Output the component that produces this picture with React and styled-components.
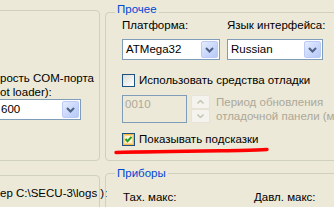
import styled, { createGlobalStyle, css } from "styled-components";

const GlobalStyle = createGlobalStyle`
  html, body { margin: 0; padding: 0; }
  body {
    background: #ece9d8;
    font-family: "Liberation Sans", Arial, sans-serif;
    font-size: 11.5px;
    color: #000;
  }
`;

const Screen = styled.div`
  position: relative;
  width: 334px;
  height: 207px;
  overflow: hidden;
  display: flex;
  gap: 5px;
  line-height: 13px;
`;

const Column = styled.div`
  flex: none;
  width: ${(p) => p.$width}px;
  margin-left: ${(p) => p.$shift || 0}px;
  display: flex;
  flex-direction: column;
`;

const Group = styled.div`
  box-sizing: border-box;
  flex: none;
  display: flex;
  flex-direction: column;
  align-items: flex-start;
  border: 1px solid #d0d0bf;
  border-radius: 4px;
  margin-top: ${(p) => p.$top}px;
  height: ${(p) => p.$height}px;
  padding: ${(p) => p.$pad};
`;

const Caption = styled.div`
  margin: ${(p) => p.$lift}px 0 0 -7px;
  padding: 0 2px;
  background: #ece9d8;
  color: #0046d5;
  white-space: nowrap;
`;

const Lines = styled.div`
  line-height: 14px;
  white-space: nowrap;
  margin-top: ${(p) => p.$top || 0}px;
  color: ${(p) => (p.$disabled ? "#aca899" : "#000")};
`;

const FieldRow = styled.div`
  display: flex;
  gap: ${(p) => p.$gap}px;
  margin-top: ${(p) => p.$top}px;
`;

const Field = styled.div`
  display: flex;
  flex-direction: column;
  gap: 7px;
  width: ${(p) => p.$width}px;
  white-space: nowrap;
`;

const Combo = styled.div`
  box-sizing: border-box;
  display: flex;
  align-items: center;
  width: ${(p) => p.$width}px;
  height: 21px;
  padding: 1px;
  margin-left: ${(p) => p.$shift || 0}px;
  border: 1px solid #7f9db9;
  background: #fff;
`;

const ComboText = styled.span`
  flex: 1;
  padding-left: ${(p) => p.$indent}px;
  white-space: nowrap;
  overflow: hidden;
`;

const DropButton = styled.span`
  box-sizing: border-box;
  flex: none;
  width: 17px;
  height: 17px;
  display: flex;
  align-items: center;
  justify-content: center;
  border: 1px solid #bccbf5;
  border-radius: 2px;
  background: linear-gradient(135deg, #e4ecfe 0%, #c9d7fb 55%, #b6c9f7 100%);
`;

const CheckRow = styled.label`
  display: flex;
  align-items: center;
  gap: 4px;
  height: 13px;
  margin-top: ${(p) => p.$top}px;
  white-space: nowrap;
`;

const Box = styled.span`
  box-sizing: border-box;
  flex: none;
  width: 13px;
  height: 13px;
  display: flex;
  align-items: center;
  justify-content: center;
  border: 1px solid #1c5180;
  background: linear-gradient(135deg, #dcdcd7 0%, #ffffff 100%);
  ${(p) =>
    p.$checked &&
    css`
      box-shadow: inset 0 0 0 1px #f7b84a, inset 0 0 0 2px #fcd88c;
      background: #fdf3dc;
    `}
`;

const EditRow = styled.div`
  display: flex;
  align-items: flex-start;
  margin-top: 8px;
`;

const Edit = styled.div`
  box-sizing: border-box;
  width: ${(p) => p.$width}px;
  height: ${(p) => p.$height}px;
  margin-left: ${(p) => p.$shift || 0}px;
  margin-top: ${(p) => p.$top || 0}px;
  padding: 2px 2px;
  border: 1px solid #7f9db9;
  background: ${(p) => (p.$disabled ? "#ece9d8" : "#fff")};
  color: ${(p) => (p.$disabled ? "#aca899" : "#000")};
`;

const Spin = styled.div`
  display: flex;
  flex-direction: column;
  margin-left: 4px;
`;

const SpinButton = styled.span`
  box-sizing: border-box;
  width: 19px;
  height: 14px;
  display: flex;
  align-items: center;
  justify-content: center;
  border: 1px solid #e6e4d8;
  border-radius: 2px;
  background: #f4f3ee;
`;

const PeriodLabel = styled(Lines)`
  margin-left: 6px;
`;

const Gauges = styled.div`
  display: flex;
  margin-top: 11px;
  padding-left: 1px;
`;

const GaugeCell = styled.span`
  width: ${(p) => p.$width}px;
  white-space: nowrap;
`;

const Stroke = styled.svg`
  position: absolute;
  left: 0;
  top: 0;
  pointer-events: none;
`;

const Chevron = () => (
  <svg width="9" height="6" viewBox="0 0 9 6">
    <path d="M1 1 L4.5 4.5 L8 1" fill="none" stroke="#4d6185" strokeWidth="2" />
  </svg>
);

const SpinArrow = ({ up }) => (
  <svg width="7" height="4" viewBox="0 0 7 4">
    <path
      d={up ? "M0.5 3.5 L3.5 0.5 L6.5 3.5" : "M0.5 0.5 L3.5 3.5 L6.5 0.5"}
      fill="none"
      stroke="#cac8bb"
      strokeWidth="1.6"
    />
  </svg>
);

const Check = () => (
  <svg width="9" height="9" viewBox="0 0 9 9">
    <path d="M1.5 4 L3.5 6.2 L7.5 1.8" fill="none" stroke="#21a121" strokeWidth="2" />
  </svg>
);

const ComboBox = ({ text, width, shift, indent = 2 }) => (
  <Combo $width={width} $shift={shift}>
    <ComboText $indent={indent}>{text}</ComboText>
    <DropButton>
      <Chevron />
    </DropButton>
  </Combo>
);

const CheckOption = ({ checked, top, children }) => (
  <CheckRow $top={top}>
    <Box $checked={checked}>{checked && <Check />}</Box>
    {children}
  </CheckRow>
);

export default function App() {
  return (
    <>
      <GlobalStyle />
      <Screen>
        <Column $width={110} $shift={-10}>
          <Group $top={10} $height={151} $pad="60px 0 0 9px">
            <Lines>
              рость COM-порта
              <br />
              ot loader):
            </Lines>
            <ComboBox text="600" width={101} shift={-20} indent={19} />
          </Group>
          <Group $top={14} $height={60} $pad="10px 0 0 9px">
            <Lines>ер C:\SECU-3\logs ):</Lines>
            <Edit $width={88} $height={21} $shift={-20} $top={7} />
          </Group>
        </Column>

        <Column $width={260}>
          <Group $top={12} $height={149} $pad="0 0 0 16px">
            <Caption $lift={-10}>Прочее</Caption>
            <FieldRow $gap={7} $top={3}>
              <Field $width={98}>
                Платформа:
                <ComboBox text="ATMega32" width={98} />
              </Field>
              <Field $width={96}>
                Язык интерфейса:
                <ComboBox text="Russian" width={96} />
              </Field>
            </FieldRow>
            <CheckOption top={14}>Использовать средства отладки</CheckOption>
            <EditRow>
              <Edit $width={65} $height={28} $disabled>
                0010
              </Edit>
              <Spin>
                <SpinButton>
                  <SpinArrow up />
                </SpinButton>
                <SpinButton>
                  <SpinArrow />
                </SpinButton>
              </Spin>
              <PeriodLabel $disabled>
                Период обновления
                <br />
                отладочной панели (мс)
              </PeriodLabel>
            </EditRow>
            <CheckOption checked top={10}>
              Показывать подсказки
            </CheckOption>
          </Group>
          <Group $top={12} $height={60} $pad="0 0 0 16px">
            <Caption $lift={-7}>Приборы</Caption>
            <Gauges>
              <GaugeCell $width={131}>Тах. макс:</GaugeCell>
              <GaugeCell>Давл. макс:</GaugeCell>
            </Gauges>
          </Group>
        </Column>

        <Stroke width="334" height="207">
          <path
            d="M116 152.5 C150 151.5 200 151 240 150.5 C255 150.3 262 150 267 149.5"
            fill="none"
            stroke="#ff0000"
            strokeWidth="3.4"
            strokeLinecap="round"
          />
        </Stroke>
      </Screen>
    </>
  );
}
